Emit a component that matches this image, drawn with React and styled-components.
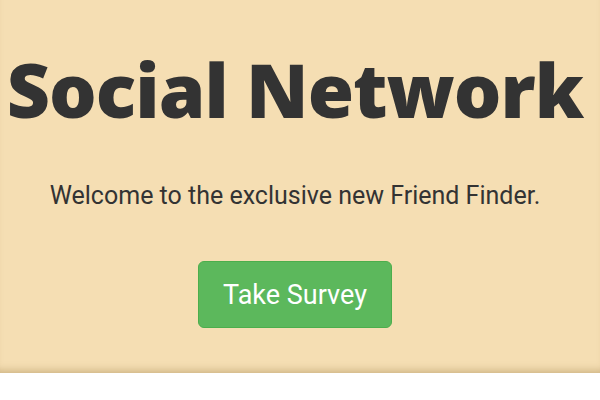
import React from "react";
import styled, { createGlobalStyle } from "styled-components";

const Global = createGlobalStyle`
  html, body { margin: 0; padding: 0; background: #ffffff; }
  body { font-family: Roboto, "Liberation Sans", sans-serif; color: #333333; }
`;

const Jumbotron = styled.section`
  background: #f5deb3;
  height: 373px;
  box-sizing: border-box;
  padding: 0 10px 0 0;
  display: flex;
  flex-direction: column;
  align-items: center;
  box-shadow: inset 0 -8px 8px -6px rgba(120, 90, 30, 0.35);
`;

const Title = styled.h1`
  margin: 44px 0 0;
  font-family: "Open Sans", sans-serif;
  font-weight: 800;
  font-size: 75px;
  line-height: 90px;
  color: #333333;
  white-space: nowrap;
  letter-spacing: -1px;
`;

const Lead = styled.p`
  margin: 46px 0 0;
  font-family: Roboto, sans-serif;
  font-size: 25px;
  line-height: 32px;
  color: #333333;
`;

const Button = styled.button`
  margin-top: 49px;
  width: 194px;
  height: 67px;
  background: #5cb85c;
  border: 1px solid #4cae4c;
  border-radius: 6px;
  color: #ffffff;
  font-family: Roboto, sans-serif;
  font-size: 27px;
  cursor: pointer;
`;

export default function App() {
  return (
    <>
      <Global />
      <Jumbotron>
        <Title>Social Network</Title>
        <Lead>Welcome to the exclusive new Friend Finder.</Lead>
        <Button>Take Survey</Button>
      </Jumbotron>
    </>
  );
}
